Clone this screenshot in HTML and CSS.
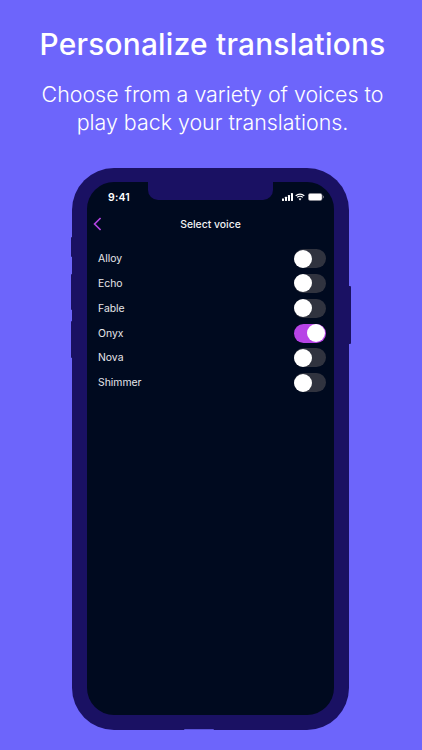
FILE: index.html
```html
<!DOCTYPE html>
<html lang="en">
<head>
<meta charset="utf-8">
<title>Personalize translations</title>
<link rel="stylesheet" href="styles.css">
</head>
<body>
<main class="page">
  <header class="hero">
    <h1 class="title">Personalize translations</h1>
    <p class="subtitle">Choose from a variety of voices to<br>play back your translations.</p>
  </header>
  <div class="phone">
    <span class="side side-l1"></span>
    <span class="side side-l2"></span>
    <span class="side side-l3"></span>
    <span class="side side-r1"></span>
    <span class="bottom-mark"></span>
    <div class="screen">
      <div class="status">
        <span class="time">9:41</span>
        <div class="notch"></div>
        <div class="status-icons">
          <svg class="signal" width="11" height="8" viewBox="0 0 11 8"><rect x="0" y="5.4" width="2" height="2.6" rx=".4"/><rect x="3" y="3.8" width="2" height="4.2" rx=".4"/><rect x="6" y="2" width="2" height="6" rx=".4"/><rect x="9" y="0" width="2" height="8" rx=".4"/></svg>
          <svg class="wifi" width="10" height="8" viewBox="0 0 11 9"><path d="M.6 3.2a7 7 0 0 1 9.8 0M2.3 5a4.6 4.6 0 0 1 6.4 0" fill="none" stroke="#fff" stroke-width="1.3"/><path d="M3.9 6.6a2.3 2.3 0 0 1 3.2 0L5.5 8.4z" fill="#fff"/></svg>
          <svg class="battery" width="16" height="8" viewBox="0 0 16 8"><rect x=".4" y=".4" width="13.6" height="7.2" rx="1.8" fill="#fff" stroke="#8d8d95" stroke-width=".6"/><path d="M14.8 2.6c.7.2 1 .8 1 1.4s-.3 1.2-1 1.4z" fill="#8d8d95"/></svg>
        </div>
      </div>
      <div class="navbar">
        <svg class="back" width="9" height="14" viewBox="0 0 9 14"><path d="M7.6 1 1.6 7l6 6" fill="none" stroke="#b144e0" stroke-width="1.7"/></svg>
        <span class="nav-title">Select voice</span>
      </div>
      <ul class="voices">
        <li class="voice"><span>Alloy</span><span class="toggle"></span></li>
        <li class="voice"><span>Echo</span><span class="toggle"></span></li>
        <li class="voice"><span>Fable</span><span class="toggle"></span></li>
        <li class="voice"><span>Onyx</span><span class="toggle on"></span></li>
        <li class="voice"><span>Nova</span><span class="toggle"></span></li>
        <li class="voice"><span>Shimmer</span><span class="toggle"></span></li>
      </ul>
    </div>
  </div>
</main>
</body>
</html>
```
FILE: styles.css
```css
* { box-sizing: border-box; }
html, body { margin: 0; padding: 0; }
body {
  width: 422px;
  height: 750px;
  overflow: hidden;
  background: #6d65fb;
  font-family: Inter, "Liberation Sans", sans-serif;
}
.page {
  display: flex;
  flex-direction: column;
  align-items: center;
  height: 750px;
  padding-top: 26px;
}
.hero { text-align: center; color: #fff; height: 142px; margin-left: 3px; }
.title {
  margin: 0;
  font-size: 29.8px;
  line-height: 36px;
  font-weight: 500;
  letter-spacing: .25px;
  white-space: nowrap;
}
.subtitle {
  margin: 18px 0 0;
  font-size: 21.4px;
  line-height: 28px;
  font-weight: 300;
  white-space: nowrap;
}
.phone {
  position: relative;
  width: 277px;
  height: 562px;
  margin-right: 1px;
  padding: 14px 15px 15px;
  background: #1a1163;
  border-radius: 42px;
}
.side { position: absolute; width: 2px; background: #1a1163; }
.side-l1 { left: -1.5px; top: 69px; height: 20px; border-radius: 1px 0 0 1px; }
.side-l2 { left: -1.5px; top: 106px; height: 36px; border-radius: 1px 0 0 1px; }
.side-l3 { left: -1.5px; top: 153px; height: 37px; border-radius: 1px 0 0 1px; }
.side-r1 { right: -1.5px; top: 118px; height: 58px; border-radius: 0 1px 1px 0; }
.bottom-mark {
  position: absolute;
  left: 112px;
  bottom: 0;
  width: 30px;
  height: 1px;
  background: #5a52d8;
  border-radius: 1px 1px 0 0;
}
.screen {
  display: flex;
  flex-direction: column;
  height: 100%;
  background: #000a1f;
  border-radius: 27px;
  overflow: hidden;
  color: #fff;
}
.status {
  display: grid;
  grid-template-columns: 61px 125px 61px;
  height: 30px;
}
.time {
  padding: 9px 0 0 21px;
  font-size: 10.5px;
  line-height: 14px;
  font-weight: 600;
  letter-spacing: .2px;
}
.notch {
  height: 18px;
  background: #1a1163;
  border-radius: 0 0 10px 10px;
}
.status-icons {
  display: flex;
  align-items: center;
  gap: 2.5px;
  height: 14px;
  margin-top: 8px;
  padding-left: 8.5px;
}
.signal { fill: #fff; }
.navbar {
  position: relative;
  display: flex;
  justify-content: center;
  align-items: center;
  height: 24px;
}
.back { position: absolute; left: 5.5px; top: 5px; }
.nav-title { font-size: 10.4px; font-weight: 500; color: #f2f2f4; }
.voices {
  list-style: none;
  margin: 10.3px 0 0;
  padding: 0 8.5px 0 11px;
}
.voice {
  display: flex;
  justify-content: space-between;
  align-items: center;
  height: 24.8px;
  font-size: 10.4px;
  color: #e6e6ea;
}
.toggle {
  position: relative;
  display: block;
  width: 32px;
  height: 19px;
  background: #30333f;
  border-radius: 10px;
}
.toggle::after {
  content: "";
  position: absolute;
  left: 0;
  top: .5px;
  width: 18px;
  height: 18px;
  background: #fff;
  border-radius: 50%;
}
.toggle.on { background: #b744e6; }
.toggle.on::after { left: auto; right: 1px; }
```
